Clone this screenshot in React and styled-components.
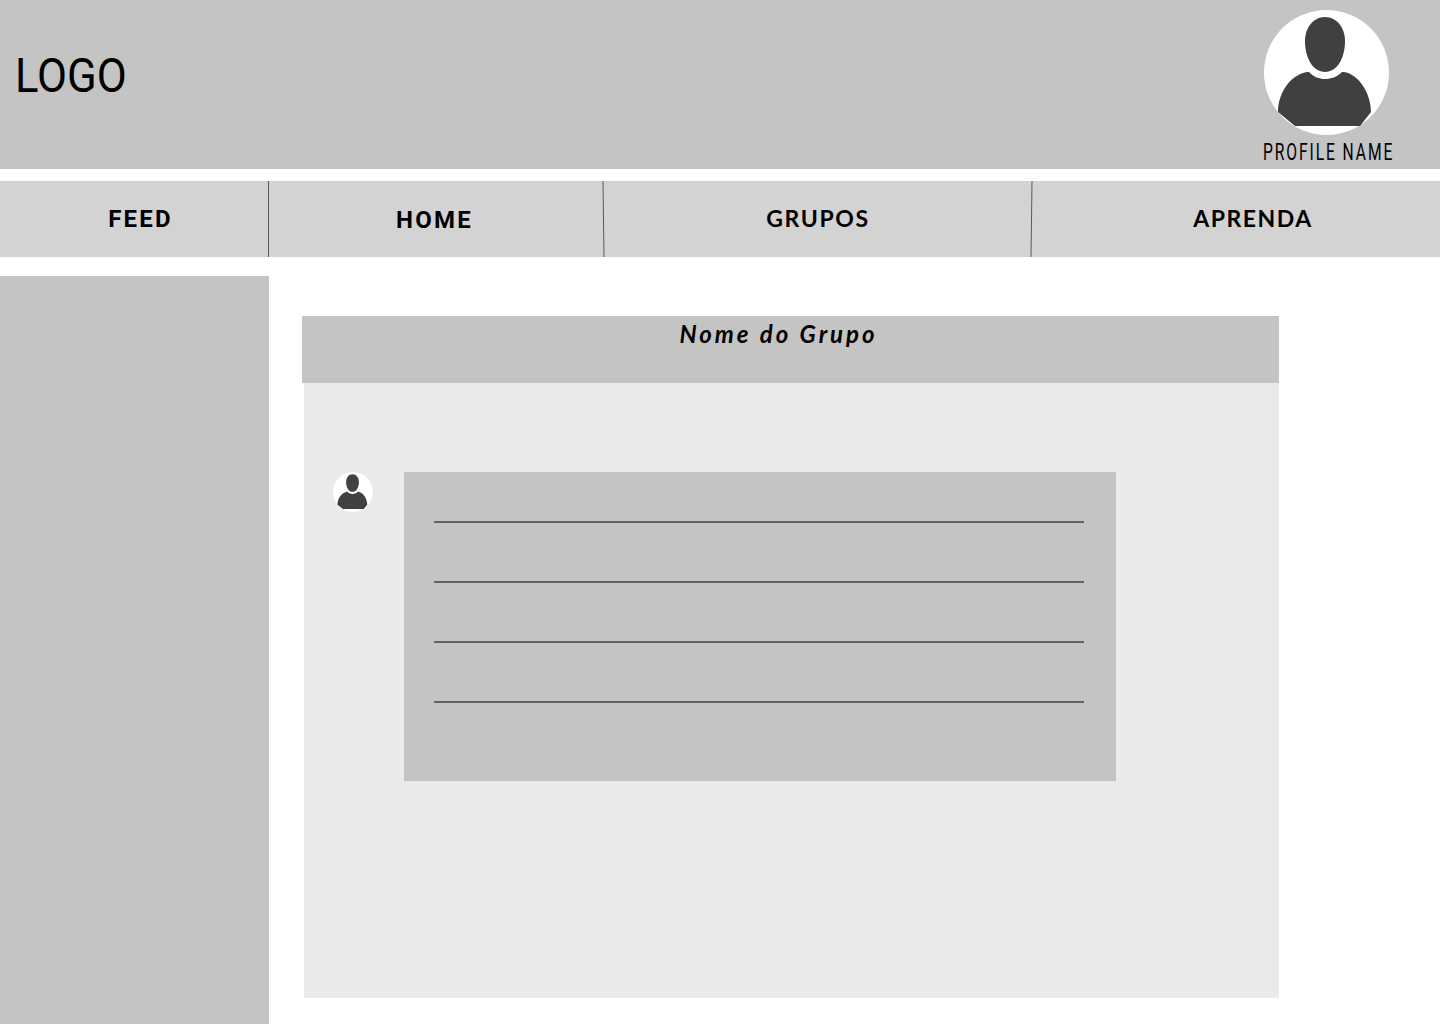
import React from 'react';
import styled, { createGlobalStyle } from 'styled-components';

const GlobalStyle = createGlobalStyle`
  * {
    box-sizing: border-box;
  }
  body {
    margin: 0;
    background: #ffffff;
    font-family: 'Roboto', sans-serif;
  }
`;

const navItems = [
  { label: 'FEED', width: '269px', shift: 6, family: 'Roboto', size: 24, spacing: 2.2, drop: 0, tilt: 0 },
  { label: 'HOME', width: '335px', shift: -2, family: 'Roboto', size: 24, spacing: 2.2, drop: 1, tilt: -0.75 },
  { label: 'GRUPOS', width: '428px', shift: 0, family: 'Lato', size: 23, spacing: 1.6, drop: -1, tilt: 0.75 },
  { label: 'APRENDA', width: '408px', shift: 17, family: 'Lato', size: 23, spacing: 1.5, drop: -1, tilt: 0 },
];

const lines = [0, 1, 2, 3];

function Avatar({ size }) {
  return (
    <AvatarCircle $size={size} viewBox="0 0 125 125">
      <circle cx="62.5" cy="62.5" r="62.5" fill="#ffffff" />
      <path
        fill="#404040"
        d="M61 7C73 7 81 18 81 31C81 48 73 62 61 62C49 62 41 48 41 31C41 18 49 7 61 7Z"
      />
      <path
        fill="#404040"
        d="M14 102C14 85 24 68 39 63C41 62 43 62 45 62C50 67 55 69 61 69C67 69 73 67 78 62C80 62 82 62 84 63C97 68 107 85 107 102L96 116L31 116Z"
      />
    </AvatarCircle>
  );
}

function App() {
  return (
    <Page>
      <GlobalStyle />
      <Header>
        <Logo>LOGO</Logo>
        <Profile>
          <Avatar size={125} />
          <ProfileName>PROFILE NAME</ProfileName>
        </Profile>
      </Header>
      <Nav>
        {navItems.map(item => (
          <NavItem key={item.label} $width={item.width} $tilt={item.tilt}>
            <NavLabel
              $shift={item.shift}
              $drop={item.drop}
              $family={item.family}
              $size={item.size}
              $spacing={item.spacing}
            >
              {item.label}
            </NavLabel>
          </NavItem>
        ))}
      </Nav>
      <Body>
        <Sidebar />
        <Main>
          <GroupTitle>Nome do Grupo</GroupTitle>
          <GroupPanel>
            <Avatar size={40} />
            <PostBox>
              {lines.map(line => (
                <PostLine key={line} />
              ))}
            </PostBox>
          </GroupPanel>
        </Main>
      </Body>
    </Page>
  );
}

const Page = styled.div`
  display: flex;
  flex-direction: column;
  width: 1440px;
  height: 1024px;
  overflow: hidden;
`;

const Header = styled.header`
  display: flex;
  justify-content: space-between;
  flex: 0 0 169px;
  padding: 10px 46px 0 15px;
  background: #c4c4c4;
`;

const Logo = styled.div`
  margin-top: 37px;
  font-family: 'Roboto', sans-serif;
  font-size: 49px;
  font-weight: 400;
  line-height: 58px;
  color: #000000;
  transform: scaleX(0.89);
  transform-origin: left center;
`;

const Profile = styled.div`
  display: flex;
  flex-direction: column;
  align-items: flex-start;
  width: 131px;
  padding-left: 1px;
`;

const AvatarCircle = styled.svg`
  display: block;
  flex: none;
  width: ${props => props.$size}px;
  height: ${props => props.$size}px;
`;

const ProfileName = styled.div`
  margin: 5px 0 0 -1px;
  font-family: 'Roboto', sans-serif;
  font-size: 23px;
  font-weight: 400;
  line-height: 26px;
  letter-spacing: 2.8px;
  white-space: nowrap;
  color: #000000;
  transform: scaleX(0.68);
  transform-origin: left center;
`;

const Nav = styled.nav`
  display: flex;
  flex: 0 0 76px;
  margin-top: 12px;
  background: #d3d3d3;
`;

const NavItem = styled.div`
  position: relative;
  display: flex;
  align-items: center;
  justify-content: center;
  flex: 0 0 ${props => props.$width};

  &:not(:last-child)::after {
    content: '';
    position: absolute;
    top: 0;
    right: 0;
    width: 1.2px;
    height: 100%;
    background: #5a5a5a;
    transform: rotate(${props => props.$tilt}deg);
  }
`;

const NavLabel = styled.span`
  position: relative;
  top: ${props => props.$drop}px;
  left: ${props => props.$shift}px;
  font-family: '${props => props.$family}', sans-serif;
  font-size: ${props => props.$size}px;
  font-weight: 700;
  letter-spacing: ${props => props.$spacing}px;
  color: #000000;
`;

const Body = styled.div`
  display: flex;
  flex: 1;
  margin-top: 19px;
`;

const Sidebar = styled.aside`
  flex: 0 0 269px;
  background: #c4c4c4;
`;

const Main = styled.main`
  display: flex;
  flex-direction: column;
  width: 977px;
  height: 682px;
  margin: 40px 0 0 33px;
`;

const GroupTitle = styled.h1`
  flex: 0 0 67px;
  margin: 0;
  padding: 3px 24px 0 0;
  background: #c4c4c4;
  font-family: 'Lato', sans-serif;
  font-size: 24px;
  font-style: italic;
  font-weight: 700;
  line-height: 30px;
  letter-spacing: 3px;
  text-align: center;
  color: #000000;
`;

const GroupPanel = styled.section`
  display: flex;
  align-items: flex-start;
  gap: 31px;
  flex: 1;
  margin-left: 2px;
  padding: 89px 0 0 29px;
  background: #eaeaea;
`;

const PostBox = styled.div`
  display: flex;
  flex-direction: column;
  gap: 58px;
  width: 712px;
  height: 309px;
  padding: 49px 32px 0 30px;
  background: #c4c4c4;
`;

const PostLine = styled.div`
  height: 2px;
  background: #636363;
`;

export default App;
